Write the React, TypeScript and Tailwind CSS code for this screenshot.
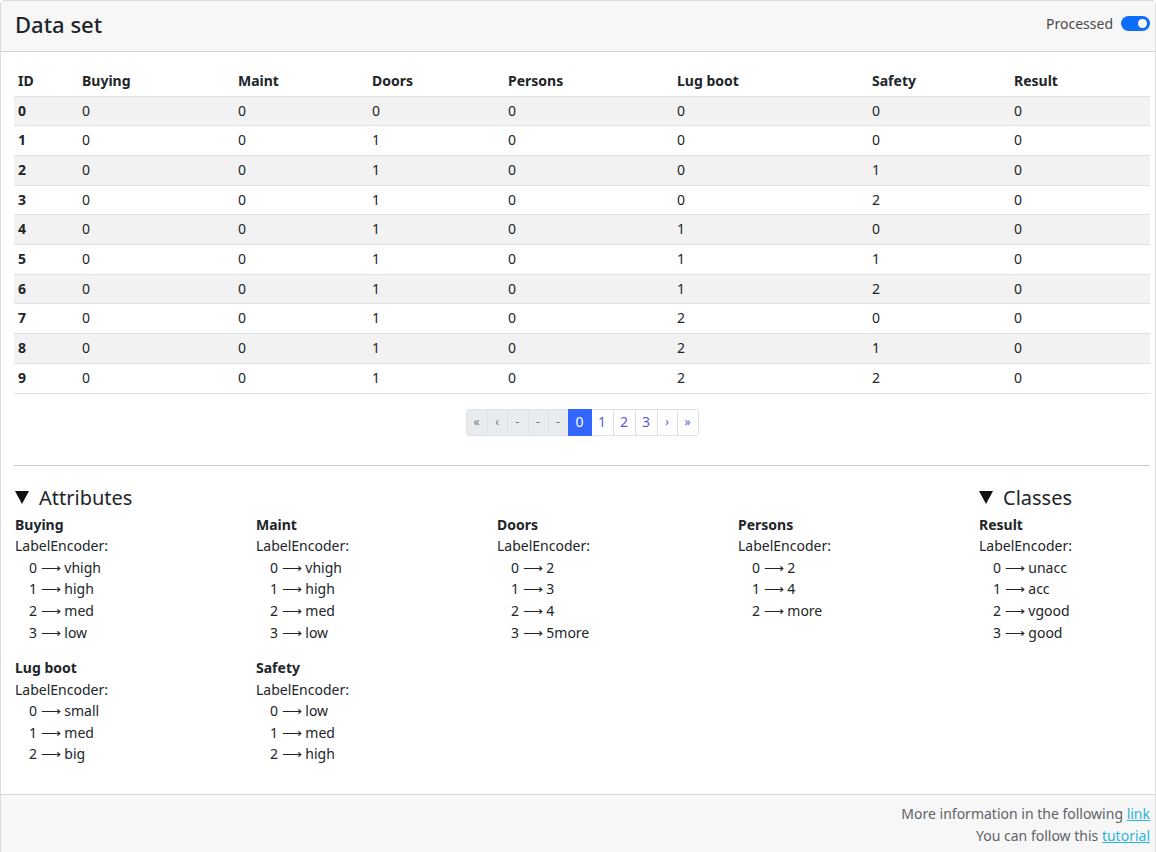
const columns = [
  { key: 'id', label: 'ID', width: 64 },
  { key: 'buying', label: 'Buying', width: 156 },
  { key: 'maint', label: 'Maint', width: 134 },
  { key: 'doors', label: 'Doors', width: 136 },
  { key: 'persons', label: 'Persons', width: 169 },
  { key: 'lugBoot', label: 'Lug boot', width: 195 },
  { key: 'safety', label: 'Safety', width: 142 },
  { key: 'result', label: 'Result', width: 140 },
]

// buying, maint, doors, persons, lug boot, safety, result
const rows = [
  [0, 0, 0, 0, 0, 0, 0],
  [0, 0, 1, 0, 0, 0, 0],
  [0, 0, 1, 0, 0, 1, 0],
  [0, 0, 1, 0, 0, 2, 0],
  [0, 0, 1, 0, 1, 0, 0],
  [0, 0, 1, 0, 1, 1, 0],
  [0, 0, 1, 0, 1, 2, 0],
  [0, 0, 1, 0, 2, 0, 0],
  [0, 0, 1, 0, 2, 1, 0],
  [0, 0, 1, 0, 2, 2, 0],
]

const attributes = [
  { name: 'Buying', values: ['vhigh', 'high', 'med', 'low'] },
  { name: 'Maint', values: ['vhigh', 'high', 'med', 'low'] },
  { name: 'Doors', values: ['2', '3', '4', '5more'] },
  { name: 'Persons', values: ['2', '4', 'more'] },
  { name: 'Lug boot', values: ['small', 'med', 'big'] },
  { name: 'Safety', values: ['low', 'med', 'high'] },
]

const pages = [
  { label: '«', w: 22, state: 'disabled' },
  { label: '‹', w: 21, state: 'disabled' },
  { label: '-', w: 22, state: 'disabled' },
  { label: '-', w: 21, state: 'disabled' },
  { label: '-', w: 21, state: 'disabled' },
  { label: '0', w: 24, state: 'active' },
  { label: '1', w: 23, state: 'normal' },
  { label: '2', w: 23, state: 'normal' },
  { label: '3', w: 23, state: 'normal' },
  { label: '›', w: 21, state: 'normal' },
  { label: '»', w: 22, state: 'normal' },
]

function Encoder({ name, values }: { name: string; values: string[] }) {
  return (
    <div className="mb-[14px] text-[14px] leading-[21.6px] text-[#212529]">
      <div className="font-bold">{name}</div>
      <div>LabelEncoder:</div>
      {values.map((v, i) => (
        <div key={i} className="pl-[14px]">
          {i} ⟶ {v}
        </div>
      ))}
    </div>
  )
}

function SectionTitle({ title }: { title: string }) {
  return (
    <h2 className="mb-[3px] flex items-center text-[20px] font-normal leading-[26px]">
      <svg width="14" height="13" viewBox="0 0 14 13" className="mr-[10px]">
        <polygon points="0,0 14,0 7,13" fill="#111" />
      </svg>
      {title}
    </h2>
  )
}

function App() {
  return (
    <div
      className="min-h-[852px] w-[1156px] bg-white text-[#212529]"
      style={{ fontFamily: '"Noto Sans", "Open Sans", sans-serif' }}
    >
      <div className="flex min-h-[852px] flex-col rounded-[4px] border border-[#dcdcdc]">
        {/* Header */}
        <div className="flex h-[51px] items-center justify-between border-b border-[#d6d6d6] bg-[#f7f7f7] pb-[5px] pl-[14px] pr-[5px]">
          <h1 className="text-[22px] font-medium leading-none">Data set</h1>
          <label className="flex items-center gap-[8px] text-[14px] text-[#4a4a4a]">
            Processed
            <span className="relative inline-block h-[15px] w-[29px] rounded-full bg-[#0d6efd]">
              <span className="absolute right-[3px] top-[3px] h-[9px] w-[9px] rounded-full bg-white" />
            </span>
          </label>
        </div>

        {/* Body */}
        <div className="flex-1 pl-[13px] pr-[5px] pt-[14px]">
          <table className="w-full border-collapse text-left text-[14px]">
            <colgroup>
              {columns.map((c) => (
                <col key={c.key} style={{ width: c.width }} />
              ))}
            </colgroup>
            <thead>
              <tr className="border-b border-[#dee2e6]">
                {columns.map((c) => (
                  <th key={c.key} className="px-[4px] py-[4px] font-bold leading-[21.5px]">
                    {c.label}
                  </th>
                ))}
              </tr>
            </thead>
            <tbody>
              {rows.map((r, i) => (
                <tr
                  key={i}
                  className={`border-b border-[#dee2e6] ${i % 2 === 0 ? 'bg-[#f2f2f2]' : 'bg-white'}`}
                >
                  <td className="px-[4px] py-[4px] font-bold leading-[20.7px]">{i}</td>
                  {r.map((v, j) => (
                    <td key={j} className="px-[4px] py-[4px] leading-[20.7px]">
                      {v}
                    </td>
                  ))}
                </tr>
              ))}
            </tbody>
          </table>

          {/* Pagination */}
          <div className="mt-[15px] flex justify-center">
            <ul className="flex text-[12px] leading-none">
              {pages.map((p, i) => (
                <li
                  key={i}
                  style={{ width: p.w }}
                  className={`-ml-px flex h-[27px] items-center justify-center border first:ml-0 first:rounded-l-[3px] last:rounded-r-[3px] ${
                    p.state === 'active'
                      ? 'relative z-10 border-[#3366ff] bg-[#3366ff] text-white'
                      : p.state === 'disabled'
                        ? 'border-[#dee2e6] bg-[#e9ecef] text-[#6c757d]'
                        : 'border-[#dee2e6] bg-white text-[#5a5ad6]'
                  } ${/\d/.test(p.label) ? 'text-[14px]' : ''}`}
                >
                  {p.label}
                </li>
              ))}
            </ul>
          </div>

          <hr className="mt-[29px] border-t border-[#c8c8c8]" />

          {/* Encoders */}
          <div className="mt-[19px] flex">
            <div className="w-[965px] pl-[1px]">
              <SectionTitle title="Attributes" />
              <div className="grid grid-cols-[241px_241px_241px_241px]">
                {attributes.map((a) => (
                  <Encoder key={a.name} name={a.name} values={a.values} />
                ))}
              </div>
            </div>
            <div className="flex-1">
              <SectionTitle title="Classes" />
              <Encoder name="Result" values={['unacc', 'acc', 'vgood', 'good']} />
            </div>
          </div>
        </div>

        {/* Footer */}
        <div className="mt-[15px] border-t border-[#d6d6d6] bg-[#f7f7f7] px-[5px] pb-[9px] pt-[8px] text-right text-[14px] leading-[22px] text-[#5f6368]">
          <div>
            More information in the following{' '}
            <a href="#" className="text-[#2bb5d8] underline">
              link
            </a>
          </div>
          <div>
            You can follow this{' '}
            <a href="#" className="text-[#2bb5d8] underline">
              tutorial
            </a>
          </div>
        </div>
      </div>
    </div>
  )
}

export default App
